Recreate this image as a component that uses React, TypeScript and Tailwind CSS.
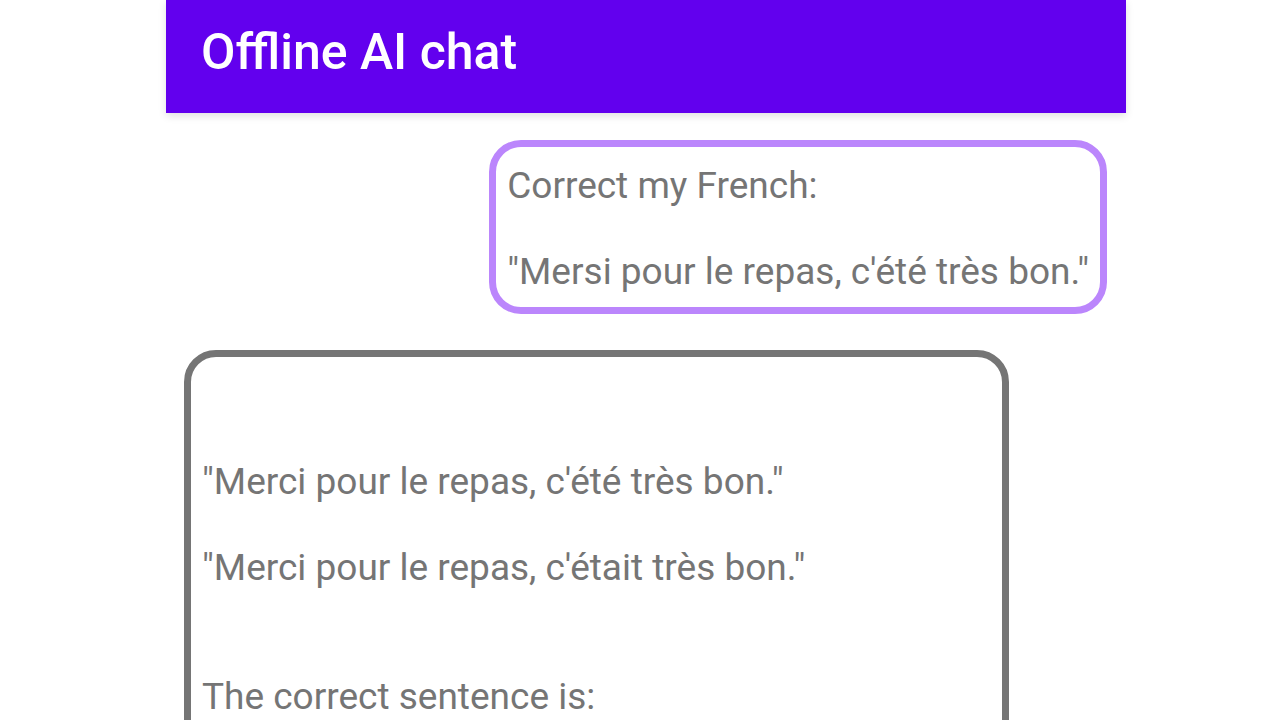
const userText = `Correct my French:

"Mersi pour le repas, c'été très bon."`;

const aiText = `

"Merci pour le repas, c'été très bon."

"Merci pour le repas, c'était très bon."


The correct sentence is:

"Merci pour le repas, c'était très bon."`;

export default function App() {
  return (
    <div
      className="min-h-screen bg-white"
      style={{ fontFamily: "Roboto, 'Liberation Sans', sans-serif" }}
    >
      <div className="ml-[166px] w-[960px]">
        <header className="relative z-10 flex h-[113px] items-center bg-[#6200ee] pb-[10px] pl-[35px] shadow-[0_3px_8px_rgba(0,0,0,0.12)]">
          <h1 className="text-[50px] font-medium leading-none text-white">
            Offline AI chat
          </h1>
        </header>

        <main className="flex flex-col pl-[18px] pr-[19px] pt-[27px]">
          <div className="self-end rounded-[32px] border-[7px] border-[#bb86fc] px-[11px] pb-[14px] pt-[17px]">
            <p className="whitespace-pre-wrap text-[37px] leading-[43px] text-[#757575]">
              {userText}
            </p>
          </div>

          <div className="mt-[36px] w-[825px] self-start rounded-[32px] border-[7px] border-[#757575] pb-[14px] pl-[11px] pr-[11px] pt-[17px]">
            <p className="whitespace-pre-wrap text-[37px] leading-[43px] text-[#757575]">
              {aiText}
            </p>
          </div>
        </main>
      </div>
    </div>
  );
}
